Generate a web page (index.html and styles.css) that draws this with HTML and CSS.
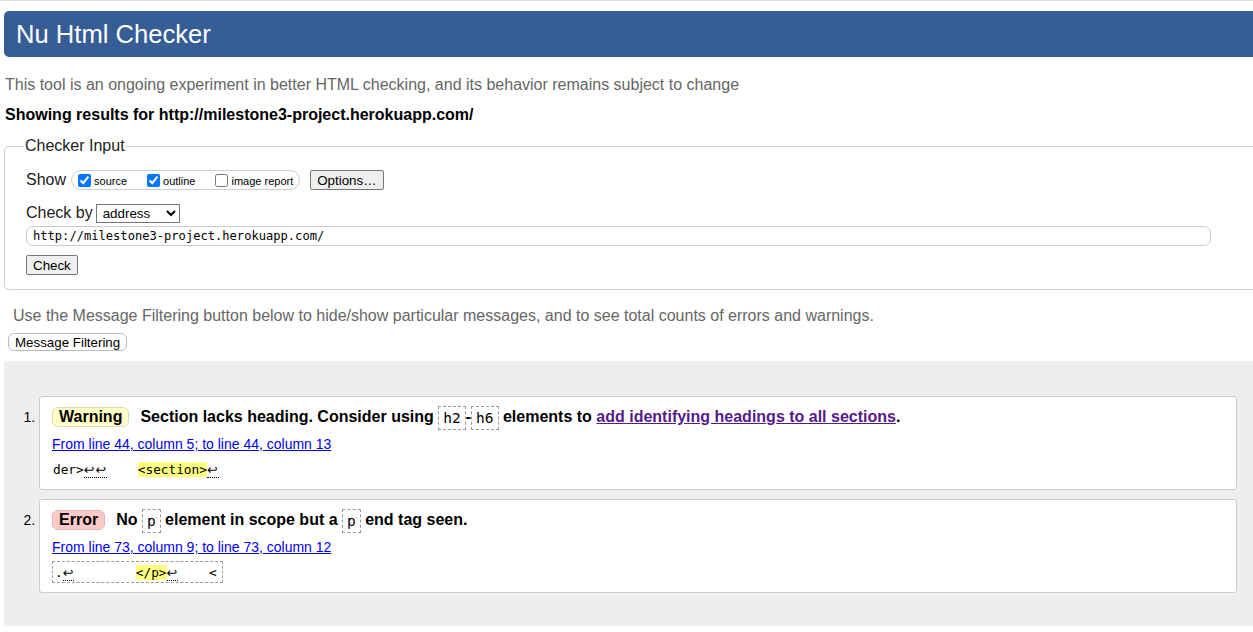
FILE: index.html
```html
<!DOCTYPE html>
<html lang="en">
<head>
<meta charset="utf-8">
<title>Nu Html Checker</title>
<link rel="stylesheet" href="styles.css">
</head>
<body>
<h1 class="banner">Nu Html Checker</h1>
<p class="intro">This tool is an ongoing experiment in better HTML checking, and its behavior remains subject to change</p>
<p class="showing">Showing results for http://milestone3-project.herokuapp.com/</p>
<fieldset class="checker">
  <legend class="legend">Checker Input</legend>
  <div class="row show-row">
    <span class="label">Show</span>
    <span class="opts">
      <label class="opt"><input type="checkbox" checked><span>source</span></label>
      <label class="opt"><input type="checkbox" checked><span>outline</span></label>
      <label class="opt last"><input type="checkbox"><span>image report</span></label>
    </span>
    <button class="btn options" type="button">Options…</button>
  </div>
  <div class="row by-row">
    <span class="label">Check by</span>
    <select class="sel"><option>address</option></select>
  </div>
  <div class="row url-row">
    <input class="url" type="text" value="http://milestone3-project.herokuapp.com/">
  </div>
  <div class="row submit-row">
    <button class="btn" type="button">Check</button>
  </div>
</fieldset>
<p class="filter-note">Use the Message Filtering button below to hide/show particular messages, and to see total counts of errors and warnings.</p>
<button class="filter-btn" type="button">Message Filtering</button>
<div class="results">
  <ol class="messages">
    <li class="msg">
      <p class="msg-line"><span class="badge warning">Warning</span><span class="text">Section lacks heading. Consider using <code class="c">h2</code>-<code class="c">h6</code> elements to <a class="doc" href="#">add identifying headings to all sections</a>.</span></p>
      <p class="loc"><a href="#">From line 44, column 5; to line 44, column 13</a></p>
      <p class="extract"><code>der&gt;<span class="lf">↩↩</span>    <b class="hl">&lt;section&gt;</b><span class="lf">↩</span></code></p>
    </li>
    <li class="msg">
      <p class="msg-line"><span class="badge error">Error</span><span class="text">No <code class="c">p</code> element in scope but a <code class="c">p</code> end tag seen.</span></p>
      <p class="loc"><a href="#">From line 73, column 9; to line 73, column 12</a></p>
      <p class="extract boxed"><code>.<span class="lf">↩</span>        <b class="hl">&lt;/p&gt;</b><span class="lf">↩</span>    &lt;</code></p>
    </li>
  </ol>
</div>
</body>
</html>
```
FILE: styles.css
```css
html {
  overflow-x: hidden;
}
body {
  margin: 0;
  padding: 0 0 0 4px;
  border-top: 1px solid #dedede;
  font-family: "Liberation Sans", Arial, sans-serif;
  font-size: 16px;
  color: #000;
  background: #fff;
}
.banner {
  margin: 10px 0 0 0;
  height: 46px;
  line-height: 46px;
  padding-left: 12px;
  background: #365d95;
  color: #fff;
  font-weight: normal;
  font-size: 25.6px;
  border-radius: 5px 0 0 5px;
}
.intro {
  margin: 19px 0 0 1px;
  line-height: 18px;
  color: #666;
}
.showing {
  margin: 12px 0 0 1px;
  line-height: 18px;
  font-weight: bold;
}
.checker {
  margin: 13px 0 0 0;
  padding: 0 0 14px 21px;
  border: 1px solid #ccc;
  border-right: none;
  border-radius: 5px 0 0 5px;
  min-width: 0;
}
.legend {
  padding: 0 1px;
  margin-left: -2px;
  line-height: 18px;
  color: #222;
}
.row {
  display: flex;
  align-items: center;
}
.label {
  color: #222;
  margin-right: 4px;
}
.show-row {
  height: 20px;
  margin-top: 15px;
}
.opts {
  display: inline-flex;
  align-items: center;
  height: 18px;
  padding: 0 6px 0 2px;
  border: 1px solid #ccc;
  border-radius: 10px;
  margin-left: 1px;
}
.opt {
  display: inline-flex;
  align-items: center;
  font-size: 11px;
  margin-right: 16px;
}
.opt.last {
  margin-right: 0;
}
.opt input {
  width: 13px;
  height: 13px;
  margin: 0 3px 0 4px;
}
.opt span {
  position: relative;
  top: 1px;
}
.btn {
  font-family: "Liberation Sans", Arial, sans-serif;
  font-size: 13.33px;
  height: 20px;
  padding: 0 6px;
  border: 1px solid #767676;
  border-radius: 2px;
  background: #efefef;
  color: #000;
}
.options {
  margin-left: 10px;
}
.by-row {
  height: 18px;
  margin-top: 14px;
}
.by-row .label {
  margin-right: 3px;
}
.sel {
  width: 84px;
  height: 19px;
  font-family: "Liberation Sans", Arial, sans-serif;
  font-size: 13.33px;
  border: 1px solid #767676;
  border-radius: 0;
  background: #fff;
  padding: 0 0 0 2px;
}
.url-row {
  margin-top: 4px;
}
.url {
  box-sizing: border-box;
  width: 1185px;
  height: 20px;
  margin: 0;
  padding: 0 6px;
  border: 1px solid #ccc;
  border-radius: 7px;
  font-family: "DejaVu Sans Mono", monospace;
  font-size: 12.1px;
  color: #000;
}
.submit-row {
  margin-top: 9px;
}
.filter-note {
  margin: 17px 0 0 9px;
  line-height: 18px;
  color: #666;
}
.filter-btn {
  display: block;
  margin: 8px 0 0 4px;
  height: 18px;
  padding: 0 6px;
  font-family: "Liberation Sans", Arial, sans-serif;
  font-size: 13.33px;
  background: #fff;
  border: 1px solid #bbb;
  border-radius: 6px;
  color: #000;
}
.results {
  margin-top: 10px;
  background: #eee;
  border-radius: 4px 0 0 4px;
  padding: 35px 16px 33px 0;
}
.messages {
  margin: 0;
  padding-left: 35px;
}
.msg {
  font-size: 14px;
  background: #fff;
  border: 1px solid #ccc;
  border-radius: 3px;
  padding: 7px 12px 9px 12px;
}
.msg + .msg {
  margin-top: 9px;
}
.msg p {
  margin: 0;
}
.msg-line {
  height: 26px;
  font-size: 16px;
  line-height: 26px;
  font-weight: bold;
}
.badge {
  display: inline-block;
  line-height: 18px;
  padding: 0 6px;
  border-radius: 6px;
  margin-right: 11px;
}
.warning {
  background: #ffffc6;
  border: 1px solid #dedcae;
}
.error {
  background: #fcc9c9;
  border: 1px solid #e3b4b4;
}
.c {
  display: inline-block;
  font-family: "DejaVu Sans Mono", monospace;
  font-weight: normal;
  font-size: 14.5px;
  line-height: 22px;
  padding: 0 4px;
  border: 1px dashed #999;
  vertical-align: middle;
}
.doc {
  color: #551a8b;
}
.loc {
  height: 18px;
  margin-top: 5px !important;
  line-height: 18px;
}
.loc a {
  color: #0000ee;
}
.extract {
  display: block;
  width: max-content;
  height: 20px;
  margin-top: 5px !important;
  line-height: 20px;
  padding: 0 2px 0 1px;
  border: 1px dashed transparent;
  border-left: 0;
}
.extract.boxed {
  border: 1px dashed #999;
  padding: 0 5px 0 2px;
}
.extract code {
  font-family: "DejaVu Sans Mono", monospace;
  font-size: 12.75px;
  white-space: pre;
}
.lf {
  font-family: "DejaVu Sans", sans-serif;
  border-bottom: 1px dotted #000;
  letter-spacing: 1px;
}
.hl {
  font-weight: normal;
  background: #ffff80;
}
```
